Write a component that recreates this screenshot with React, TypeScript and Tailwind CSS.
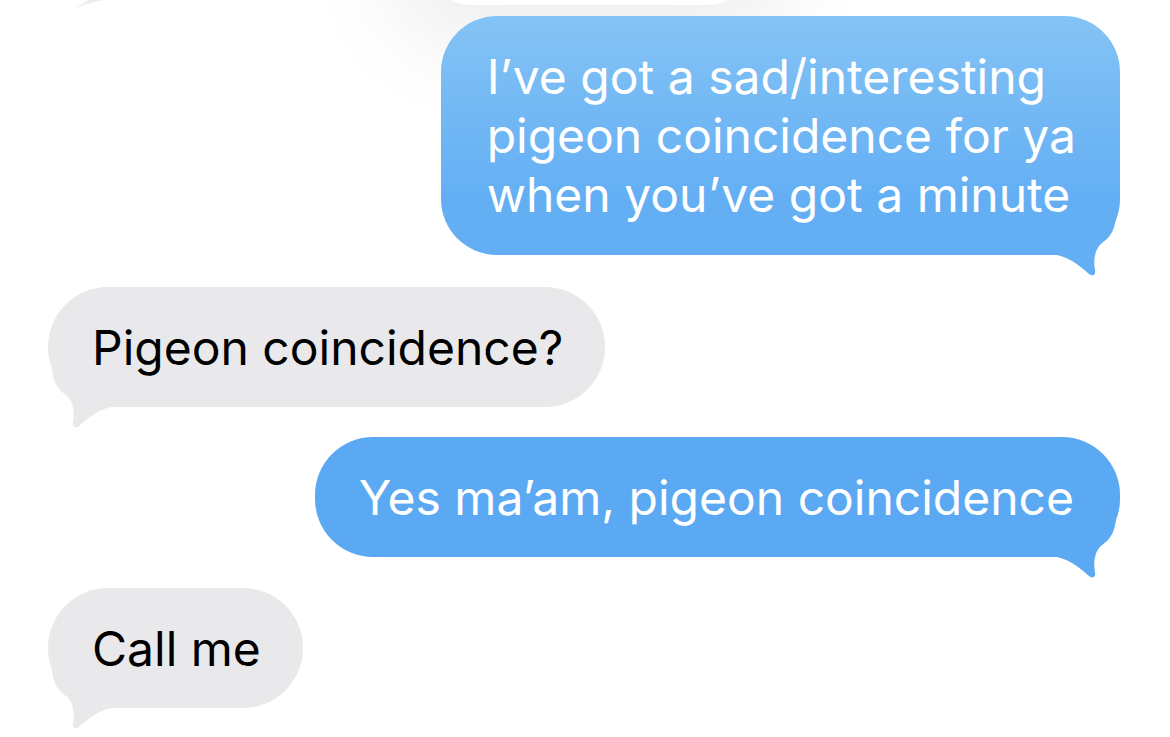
import React from 'react';

const font = { fontFamily: 'Inter, "Liberation Sans", sans-serif' };

function TailRight({ color }: { color: string }) {
  return (
    <svg className="absolute right-[1px] bottom-[-24px]" width="72" height="66" viewBox="0 0 72 66">
      <path
        d="M0 0 L69 0 C69 15 64 24 55 30 C48 35 46 47 48 57 C49 62 46 64 42 61 C34 54 24 45 10 42 L0 42 Z"
        fill={color}
      />
    </svg>
  );
}

function TailLeft({ color }: { color: string }) {
  return (
    <svg className="absolute left-[1px] bottom-[-24px]" width="72" height="66" viewBox="0 0 72 66">
      <path
        d="M72 0 L3 0 C3 15 8 24 17 30 C24 35 26 47 24 57 C23 62 26 64 30 61 C38 54 48 45 62 42 L72 42 Z"
        fill={color}
      />
    </svg>
  );
}

function Sent({ lines, light }: { lines: string[]; light?: boolean }) {
  return (
    <div className="flex justify-end pr-[50px]">
      <div
        className={
          light
            ? 'relative rounded-[56px] bg-linear-to-b from-[#84c3f5] via-[#64aff4] via-75% to-[#64aff4] pl-[46px] pr-[44px] py-[31px] text-white'
            : 'relative rounded-[58px] bg-[#5ca9f3] px-[44px] pr-[46px] py-[30.5px] text-white'
        }
      >
        <TailRight color={light ? '#64aff4' : '#5ca9f3'} />
        <div className="relative text-[48px] leading-[59px]">
          {lines.map((l) => (
            <div key={l}>{l}</div>
          ))}
        </div>
      </div>
    </div>
  );
}

function Received({ text }: { text: string }) {
  return (
    <div className="flex pl-[48px]">
      <div className="relative rounded-[60px] bg-[#e9e9eb] pl-[44px] pr-[42px] py-[30.5px] text-black">
        <TailLeft color="#e9e9eb" />
        <div className="relative text-[48px] leading-[59px]">{text}</div>
      </div>
    </div>
  );
}

export default function App() {
  return (
    <div className="relative h-[737px] w-[1170px] overflow-hidden bg-white" style={font}>
      {/* blurred bubble peeking in from above */}
      <div className="absolute left-[430px] top-[-80px] h-[85px] w-[318px] rounded-[40px] bg-white shadow-[0_0_90px_50px_rgba(0,0,0,0.06)]" />
      <svg className="absolute left-[68px] top-0" width="40" height="8" viewBox="0 0 40 8">
        <path d="M8 8 C14 6 24 2 36 0 L20 0 C16 3 11 6 8 8 Z" fill="#e6e6e8" opacity="0.7" />
      </svg>

      <div className="relative flex flex-col pt-[16px]">
        <Sent light lines={['I\u2019ve got a sad/interesting', 'pigeon coincidence for ya', 'when you\u2019ve got a minute']} />
        <div className="mt-[32px]">
          <Received text="Pigeon coincidence?" />
        </div>
        <div className="mt-[30px]">
          <Sent lines={['Yes ma\u2019am, pigeon coincidence']} />
        </div>
        <div className="mt-[31px]">
          <Received text="Call me" />
        </div>
      </div>
    </div>
  );
}
